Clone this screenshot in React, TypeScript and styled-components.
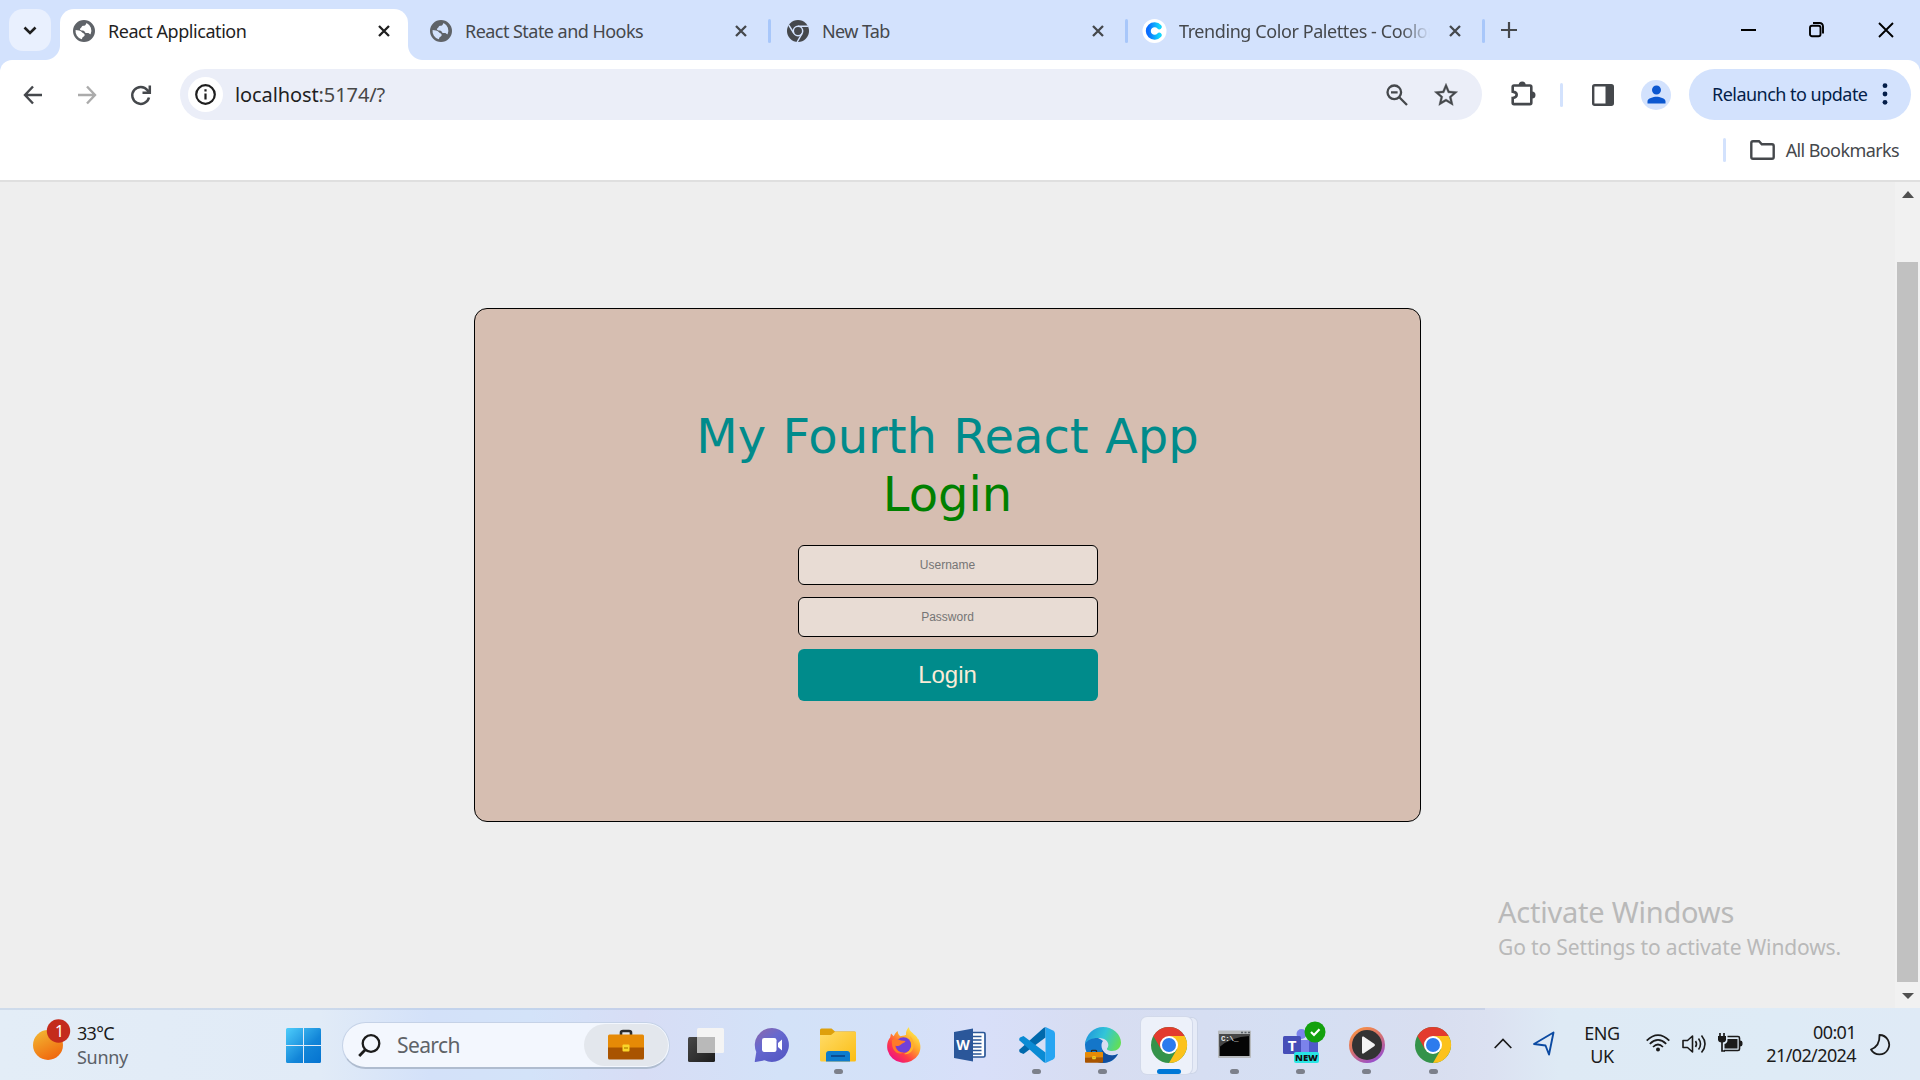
import React from "react";
import styled, { createGlobalStyle, css } from "styled-components";
import { MdStarOutline, MdPerson } from "react-icons/md";

const GlobalStyle = createGlobalStyle`
  *, *::before, *::after { box-sizing: border-box; }
  body { margin: 0; background: #ededed; overflow: hidden; }
  svg { display: block; flex: none; overflow: visible; }
`;

const ui = `"Noto Sans", "Open Sans", sans-serif`;

const Screen = styled.div`
  position: relative;
  display: flex;
  flex-direction: column;
  width: 1920px;
  height: 1080px;
  overflow: hidden;
  font-family: ${ui};
`;

const Label = styled.span<{ $size?: number; $track?: number; $color?: string; $line?: number }>`
  font-size: ${(p) => p.$size ?? 18}px;
  letter-spacing: ${(p) => p.$track ?? 0}px;
  color: ${(p) => p.$color ?? "#3c4043"};
  line-height: ${(p) => p.$line ?? 24}px;
  font-weight: 400;
  white-space: nowrap;
`;

/* Tab strip */
const TabStrip = styled.header`
  display: flex;
  height: 60px;
  padding: 9px 0 0 9px;
  background: #d3e2fd;
`;
const TabSearch = styled.button`
  display: grid;
  place-items: center;
  width: 42px;
  height: 42px;
  margin-right: 9px;
  padding: 0;
  border: 0;
  border-radius: 14px;
  background: #e9f0fe;
`;
const TabCell = styled.div<{ $active?: boolean }>`
  position: relative;
  display: flex;
  align-items: center;
  width: ${(p) => (p.$active ? 348 : 357)}px;
  height: 51px;
  margin-right: ${(p) => (p.$active ? 9 : 0)}px;
  padding: 0 3px 8px 11px;
  ${(p) =>
    p.$active &&
    css`
      padding-right: 15px;
      background: #fff;
      border-radius: 14px 14px 0 0;
      &::before,
      &::after {
        content: "";
        position: absolute;
        bottom: 0;
        width: 15px;
        height: 15px;
      }
      &::before {
        left: -15px;
        background: radial-gradient(circle at 0 0, transparent 14.5px, #fff 15.5px);
      }
      &::after {
        right: -15px;
        background: radial-gradient(circle at 100% 0, transparent 14.5px, #fff 15.5px);
      }
    `}
`;
const Favicon = styled.div`
  display: grid;
  place-items: center;
  width: 26px;
  height: 26px;
  margin-right: 11px;
  flex: none;
`;
const TabTitle = styled.div<{ $fade?: boolean }>`
  flex: 1;
  min-width: 0;
  white-space: nowrap;
  padding-top: 1px;
  ${(p) => p.$fade && css`mask-image: linear-gradient(90deg, #000 222px, transparent 251px);`}
`;
const TabClose = styled.div`
  display: grid;
  place-items: center;
  width: 18px;
  margin: 0 0 0 9px;
`;
const TabRule = styled.i`
  width: 3px;
  height: 24px;
  margin-left: 18px;
  border-radius: 2px;
  background: #a8c7fa;
`;
const NewTab = styled.div`
  padding: 13px 0 0 13px;
`;
const WindowButtons = styled.div`
  display: flex;
  margin-left: auto;
  height: 41px;
`;
const WindowButton = styled.div`
  display: grid;
  place-items: center;
  width: 68.5px;
`;

/* Toolbar */
const ChromeBody = styled.div`
  background: linear-gradient(#d3e2fd 14px, #fff 14px);
  height: 122px;
`;
const ChromeSheet = styled.div`
  height: 122px;
  background: #fff;
  border-radius: 12px 12px 0 0;
  border-bottom: 2px solid #dfdfdf;
`;
const Toolbar = styled.div`
  display: flex;
  align-items: center;
  height: 69px;
  padding: 0 9px 0 22px;
`;
const NavGroup = styled.div`
  display: flex;
  gap: 31px;
  width: 158px;
`;
const Omnibox = styled.div`
  display: flex;
  align-items: center;
  width: 1302px;
  height: 51px;
  padding: 0 22px 0 8px;
  border-radius: 26px;
  background: #ebeef8;
`;
const SiteInfo = styled.div`
  display: grid;
  place-items: center;
  width: 35px;
  height: 35px;
  margin-right: 12px;
  border-radius: 50%;
  background: #fff;
`;
const UrlRest = styled.span`
  color: #474747;
`;
const OmniIcons = styled.div`
  display: flex;
  align-items: center;
  gap: 24px;
  margin-left: auto;
`;
const Extensions = styled.div`
  display: flex;
  align-items: center;
  margin-left: 27px;
`;
const PuzzleSlot = styled.div`
  padding-bottom: 3px;
`;
const ThinRule = styled.i<{ $gap: string }>`
  width: 3px;
  height: 24px;
  margin: ${(p) => p.$gap};
  border-radius: 2px;
  background: #d3e2fd;
`;
const Avatar = styled.div`
  display: grid;
  place-items: center;
  width: 30px;
  height: 30px;
  margin-left: 27px;
  border-radius: 50%;
  background: #d3e2fd;
  color: #0b57d0;
`;
const Relaunch = styled.button`
  display: flex;
  align-items: center;
  justify-content: space-between;
  width: 222px;
  height: 51px;
  margin-left: auto;
  padding: 0 23px 1px 23px;
  border: 0;
  border-radius: 26px;
  background: #d3e2fd;
  font-family: ${ui};
`;
const Bookmarks = styled.div`
  display: flex;
  align-items: center;
  justify-content: flex-end;
  height: 41px;
  padding-right: 21px;
`;
const FolderSlot = styled.div`
  margin-right: 11px;
`;

/* Page */
const Viewport = styled.main`
  display: flex;
  height: 826px;
  background: #eee;
`;
const Page = styled.div`
  flex: 1;
  display: flex;
  flex-direction: column;
  align-items: center;
  padding-top: 126px;
`;
const Card = styled.section`
  display: flex;
  flex-direction: column;
  align-items: center;
  width: 947px;
  height: 514px;
  padding-top: 98px;
  border: 1px solid #000;
  border-radius: 13px;
  background: #d6beb1;
`;
const Heading = styled.h1<{ $color: string }>`
  margin: 0;
  font: 400 48px/58px "DejaVu Sans", Verdana, sans-serif;
  word-spacing: 1px;
  color: ${(p) => p.$color};
`;
const Form = styled.form`
  display: flex;
  flex-direction: column;
  gap: 12px;
  width: 300px;
  margin-top: 22px;
`;
const Field = styled.input`
  height: 40px;
  padding: 0;
  border: 1px solid #000;
  border-radius: 6px;
  background: #e8dcd4;
  text-align: center;
  font: 12px "Liberation Sans", Arial, sans-serif;
  &::placeholder { color: #757575; }
`;
const Submit = styled.button`
  height: 52px;
  padding: 0;
  border: 0;
  border-radius: 6px;
  background: #008b8b;
  color: #faebd7;
  font: 24px "Liberation Sans", Arial, sans-serif;
`;
const ScrollTrack = styled.div`
  display: flex;
  flex-direction: column;
  align-items: center;
  width: 25px;
  background: #f1f1f1;
`;
const ScrollThumb = styled.div`
  width: 21px;
  height: 720px;
  margin: 64px 0 11px;
  background: #c1c1c1;
`;
const ScrollArrow = styled.i<{ $down?: boolean }>`
  margin-top: ${(p) => (p.$down ? 0 : 9)}px;
  border: 6px solid transparent;
  border-width: ${(p) => (p.$down ? "6px 6px 0" : "0 6px 7px")};
  border-${(p) => (p.$down ? "top" : "bottom")}-color: #505050;
`;
const Watermark = styled.aside`
  position: absolute;
  left: 1498px;
  top: 892px;
  display: flex;
  flex-direction: column;
`;

/* Taskbar */
const Taskbar = styled.footer`
  position: relative;
  display: flex;
  height: 72px;
  background: linear-gradient(90deg, #e3edf7 0, #e1ebf7 320px, #d3e1f9 430px, #d3e3f9 530px, #d7ddf5 640px, #d3e2f8 780px, #d4e1f8 900px, #d8dff9 980px, #d7ddf1 1100px, #d5dff3 1300px, #d8def0 1430px, #dbe1f1 1490px, #deeaf5 1560px, #deebf6 1780px, #dfeaf6 1920px);
  &::before {
    content: "";
    position: absolute;
    inset: 0 435px auto 0;
    height: 2px;
    background: rgba(150, 172, 205, 0.28);
  }
`;
const Weather = styled.div`
  display: flex;
  align-items: flex-start;
  width: 286px;
  padding: 11px 0 0 33px;
`;
const WeatherText = styled.div`
  display: flex;
  flex-direction: column;
  margin: 2px 0 0 7px;
`;
const StartSlot = styled.div`
  padding-top: 20px;
  width: 56px;
`;
const SearchBox = styled.div`
  display: flex;
  align-items: center;
  width: 328px;
  height: 47px;
  margin-top: 14px;
  padding: 0 1px 0 15px;
  border: 1px solid #c5d2e7;
  border-bottom: 2px solid #afbccf;
  border-radius: 24px;
  background: #f3f7fe;
`;
const SearchText = styled.div`
  margin-left: 16px;
`;
const SearchBadge = styled.div`
  display: grid;
  place-items: center;
  width: 84px;
  height: 42px;
  margin-left: auto;
  padding-right: 1px;
  border-radius: 21px;
  background: #e3e7ed;
`;
const Apps = styled.div`
  display: flex;
  margin-left: 3px;
`;
const AppCell = styled.div<{ $active?: boolean }>`
  display: flex;
  flex-direction: column;
  align-items: center;
  justify-content: space-between;
  width: 66.1px;
  height: 66px;
  padding-top: 19px;
  position: relative;
  > * { position: relative; }
  ${(p) =>
    p.$active &&
    css`
      &::before,
      &::after {
        content: "";
        position: absolute;
        top: 9px;
        height: 57px;
        border-radius: 6px;
      }
      &::before {
        left: 11px;
        width: 51px;
        background: #e6ebf7;
        border: 1px solid #ccd5e8;
        border-left-width: 0;
      }
      &::after {
        left: 5px;
        width: 51px;
        background: #edf1fa;
        box-shadow: 0 0 0 1px #d2d9ea;
        z-index: 0;
      }
      > * { z-index: 1; }
    `}
`;
const Dot = styled.i<{ $kind?: "idle" | "on" | "none" }>`
  width: ${(p) => (p.$kind === "on" ? 24 : 9)}px;
  height: 5px;
  border-radius: 3px;
  background: ${(p) => (p.$kind === "on" ? "#0078d7" : p.$kind === "idle" ? "#7c808b" : "transparent")};
`;
const Tray = styled.div`
  display: flex;
  align-items: center;
  margin-left: auto;
  padding: 0 30px 2px 0;
`;
const TrayItem = styled.div<{ $w: number; $align?: string; $shift?: number }>`
  display: flex;
  flex-direction: column;
  align-items: ${(p) => p.$align ?? "center"};
  width: ${(p) => p.$w}px;
  padding-top: ${(p) => p.$shift ?? 0}px;
`;

const CloseIcon = ({ color = "#3c3c3c", size = 12, w = 2.3 }) => (
  <svg width={size} height={size} viewBox={`0 0 ${size} ${size}`} stroke={color} strokeWidth={w}>
    <path d={`M1 1L${size - 1} ${size - 1}M${size - 1} 1L1 ${size - 1}`} />
  </svg>
);

const GlobeIcon = () => (
  <svg width="22" height="22" viewBox="0 0 22 22" fill="#5f6368" fillRule="evenodd">
    <path d="M11 0a11 11 0 1 1 0 22a11 11 0 0 1 0-22zM13.500 2.900C12.800 5 12 5.800 10 5.800c-1.200 0-1.200 1.400-2 1.900-1.500.900-1.300 2.600.500 2.700 1.800.100 2.800.100 3.400 1.500.500 1.300 1.600 1.200 3.300 1.200 1.300 0 1.300 1.600 2.400 1.200a8.700 8.700 0 0 0-4.100-11.400zM2.600 9.900A8.600 8.600 0 0 0 8.700 19.300c.700-.200.200-1.500 1.300-2.200 1.200-.700 1.900-1.300 1.600-2.500-.300-1.600-2-1.300-2.900-2.700C7.500 10 4.800 10.300 2.600 9.900z" />
  </svg>
);

const ChromeMono = () => (
  <svg width="22" height="22" viewBox="0 0 22 22">
    <circle cx="11" cy="11" r="11" fill="#45484c" />
    <circle cx="11" cy="11" r="4.7" fill="none" stroke="#d3e2fd" strokeWidth="1.5" />
    <path d="M11 6.3h10M6.9 13.3L1.8 5.2M15.1 13.3L10.2 22" stroke="#d3e2fd" strokeWidth="1.5" />
  </svg>
);

const CoolorsIcon = () => (
  <svg width="26" height="26" viewBox="0 0 26 26">
    <defs>
      <linearGradient id="cool" x1="0" x2="1">
        <stop offset="0" stopColor="#0a6cff" />
        <stop offset="1" stopColor="#12d4fb" />
      </linearGradient>
    </defs>
    <circle cx="12.5" cy="13" r="12" fill="#fff" />
    <path d="M17.300 8.800A6.300 6.300 0 1 0 17.300 17.200" fill="none" stroke="url(#cool)" strokeWidth="5" strokeLinecap="round" />
  </svg>
);

const ChromeIcon = () => (
  <svg width="36" height="36" viewBox="0 0 36 36">
    <circle cx="18" cy="18" r="18" fill="#34934a" />
    <path d="M18 9H33.6A18 18 0 0 1 18 36L25.8 22.5Z" fill="#fcc21b" />
    <path d="M2.4 9A18 18 0 0 1 33.6 9H18L10.2 22.5Z" fill="#e33b2e" />
    <circle cx="18" cy="18" r="9" fill="#fff" />
    <circle cx="18" cy="18" r="7" fill="#2c7bed" />
  </svg>
);

const Briefcase = () => (
  <>
    <path d="M13 5V2.5Q13 1 15 1h6q2 0 2 1.500V5" fill="none" stroke="#2b2b2b" strokeWidth="2.6" />
    <path d="M0 6q0-1.500 1.500-1.500h33q1.500 0 1.500 1.500v12H0z" fill="#e68a06" />
    <path d="M0 17.500h36v10.500q0 1.500-1.500 1.500h-33Q0 29.500 0 28z" fill="#a95400" />
    <rect x="14.500" y="14.500" width="7" height="7" rx="1" fill="#fad62a" />
    <path d="M16 18h4" stroke="#b98600" strokeWidth="1.300" />
  </>
);

const TaskViewIcon = () => (
  <svg width="36" height="36" viewBox="0 0 36 36">
    <defs>
      <linearGradient id="tv" x1="0" y1="0" x2="1" y2="1">
        <stop offset="0" stopColor="#484848" />
        <stop offset="1" stopColor="#1d1d1d" />
      </linearGradient>
    </defs>
    <rect x="0" y="10" width="27" height="25" rx="1.500" fill="url(#tv)" />
    <rect x="9" y="1" width="27" height="25" rx="1.500" fill="#f4f4f4" />
    <rect x="9" y="10" width="18" height="16" fill="#b9b9b9" />
  </svg>
);

const ChatIcon = () => (
  <svg width="36" height="36" viewBox="0 0 36 36">
    <defs>
      <linearGradient id="chat" x1="0" y1="0" x2="0.700" y2="1">
        <stop offset="0" stopColor="#9067a8" />
        <stop offset="0.450" stopColor="#6668cf" />
        <stop offset="1" stopColor="#5558c4" />
      </linearGradient>
    </defs>
    <path d="M18 1a17 17 0 1 1-7.500 32.300L1.500 35q-1 0-.700-1L2.300 25A17 17 0 0 1 18 1z" fill="url(#chat)" />
    <rect x="8" y="11" width="14.500" height="14" rx="2.200" fill="#fff" />
    <path d="M24 16l4-3.500v11L24 20z" fill="#fff" />
  </svg>
);

const FolderIcon = () => (
  <svg width="36" height="36" viewBox="0 0 36 36">
    <defs>
      <linearGradient id="fold" x1="0" y1="0" x2="1" y2="1">
        <stop offset="0" stopColor="#ffdc69" />
        <stop offset="1" stopColor="#fbbd13" />
      </linearGradient>
    </defs>
    <path d="M0 3q0-1.500 1.500-1.500h10L15 4.500h19.500q1.500 0 1.500 1.500v4H0z" fill="#dea00c" />
    <path d="M0 8h11l4-3.200h21V33q0 1.500-1.500 1.500h-33Q0 34.500 0 33z" fill="url(#fold)" />
    <path d="M6 34.500V27q0-3 3-3h18q3 0 3 3v7.500z" fill="#0e7ccd" />
    <path d="M11 29h14" stroke="#0a4d94" strokeWidth="2" />
  </svg>
);

const FirefoxIcon = () => (
  <svg width="36" height="36" viewBox="0 0 36 36">
    <defs>
      <linearGradient id="ff" x1="0.850" y1="0.100" x2="0.200" y2="0.900">
        <stop offset="0" stopColor="#fff04d" />
        <stop offset="0.380" stopColor="#ffa32b" />
        <stop offset="0.720" stopColor="#ff3f45" />
        <stop offset="1" stopColor="#ef157f" />
      </linearGradient>
    </defs>
    <path d="M23 0c0 4 3 5 5 7.500 1.500 1 3 2 3.500 4 1 .500 1.500 1.500 1.500 2.500 2 4 2 9-.500 13.500A17 17 0 0 1 1.500 23C.500 17 2 13 4.200 10.500L5 6.500l2.700 2.800c1-2.300 2.300-4 4-5.300 0 2 .800 4 2.800 5.200C17.500 8.700 20 8 20 8c-.500-3 .800-6 3-8z" fill="url(#ff)" />
    <circle cx="17.500" cy="18" r="7.800" fill="#7140d8" />
    <path d="M6 13c3-2 6-1 9 .500l4.500.500c-.500 2-3.500 2.200-4.800 3.800-1.700 1.500-4 1.500-5.700.700 1 5 5 7.500 9 7-6 3-13-1-12-12.500z" fill="#ff7a2a" />
    <path d="M24 9c5 5 5 12 1 16-3 3-7 2-7 2 6-2 8-7 7-11z" fill="#ffb12b" />
  </svg>
);

const WordIcon = () => (
  <svg width="36" height="36" viewBox="0 0 36 36">
    <rect x="14" y="5.500" width="19" height="24.500" rx="1.500" fill="#fff" stroke="#2b5797" strokeWidth="1.700" />
    <path d="M18 9.500h11.500M18 13h11.500M18 16.500h11.500M18 20h11.500M18 23.500h11.500M18 27h11.500" stroke="#2b5797" strokeWidth="1.600" />
    <path d="M2 5L21 1.500v33L2 31z" fill="#2b579a" />
    <text x="11" y="23" textAnchor="middle" fontFamily="Open Sans, sans-serif" fontWeight="700" fontSize="14" fill="#fff">W</text>
  </svg>
);

const CodeIcon = () => (
  <svg width="36" height="36" viewBox="0 0 36 36">
    <path d="M26.500 0v10.500L4.500 27 1 25.500Q-.500 24 .500 22.500L24.500 1z" fill="#0069ac" />
    <path d="M26.500 36V25.500L4.500 9 1 10.500Q-.500 12 .500 13.500L24.500 35z" fill="#0a8bd4" />
    <path d="M26.500 0L34 3.500q2 1 2 3v23q0 2-2 3L26.500 36z" fill="#27a5f2" />
  </svg>
);

const EdgeIcon = () => (
  <svg width="36" height="36" viewBox="0 0 36 36">
    <defs>
      <linearGradient id="edgeTop" x1="0" y1="0.300" x2="1" y2="0.600">
        <stop offset="0" stopColor="#2196dc" />
        <stop offset="0.500" stopColor="#32c5d8" />
        <stop offset="1" stopColor="#62df56" />
      </linearGradient>
    </defs>
    <path d="M0 18c0 10 8 18 18 18 8 0 12-4 15-9-5 2.500-12 2-14.500-2.500C15 19 17 15 18 14 12 8 0 9 0 18z" fill="#1476c9" />
    <path d="M15 35.800c8 1 14.500-2.800 18-8.800-6 3-13 1-15.500-4C15 28 16 32 15 35.800z" fill="#124f9e" />
    <path d="M0 17C1 7 9 0 18 0c10 0 18 7.500 18 15.500 0 5-4 8.500-9 8.500-3 0-5.500-1-5-2.500 3-3 1-9-5-10C10 10 3 12 0 17z" fill="url(#edgeTop)" />
    <g transform="translate(0 23) scale(.5 .43)"><Briefcase /></g>
  </svg>
);

const TerminalIcon = () => (
  <svg width="36" height="36" viewBox="0 0 36 36">
    <rect x="1" y="3.500" width="33" height="27.500" rx="1" fill="#b7babd" />
    <path d="M24 5.500h2m1.500 0h2m1.500 0h2" stroke="#5a6068" strokeWidth="1.500" />
    <rect x="2.500" y="7" width="30" height="22" fill="#050505" />
    <path d="M2.500 7h30v2Q14 10 2.500 20z" fill="#474747" />
    <text x="4" y="14" fontFamily="Liberation Mono, monospace" fontWeight="700" fontSize="7.500" letterSpacing="-.2" fill="#eee">C:\_</text>
  </svg>
);

const TeamsIcon = () => (
  <svg width="36" height="36" viewBox="0 0 36 36">
    <circle cx="18.500" cy="7" r="5" fill="#7b83eb" />
    <path d="M14 13h13v12q0 7-7 7t-7-6z" fill="#7b83eb" />
    <path d="M26 14h9v11q0 5-5 5h-4z" fill="#5059c9" />
    <rect x="0" y="9" width="18" height="18" rx="1.500" fill="#464eb8" />
    <text x="9" y="23.500" textAnchor="middle" fontFamily="Open Sans, sans-serif" fontWeight="700" fontSize="15" fill="#fff">T</text>
    <circle cx="32" cy="5" r="10.500" fill="#13a10e" />
    <path d="M28 5l3 3 5.500-5.800" fill="none" stroke="#fff" strokeWidth="2.200" />
    <rect x="11" y="25" width="25" height="11" rx="2" fill="#28e5e5" />
    <text x="23.500" y="34" textAnchor="middle" fontFamily="Open Sans, sans-serif" fontWeight="800" fontSize="9.500" fill="#111">NEW</text>
  </svg>
);

const MediaIcon = () => (
  <svg width="36" height="36" viewBox="0 0 36 36">
    <defs>
      <linearGradient id="media" x1="0" y1="0" x2="0.600" y2="1">
        <stop offset="0" stopColor="#ff9a3c" />
        <stop offset="0.500" stopColor="#dd7467" />
        <stop offset="1" stopColor="#9a50c8" />
      </linearGradient>
    </defs>
    <circle cx="18" cy="18" r="18" fill="url(#media)" />
    <circle cx="18" cy="18" r="15" fill="#333" />
    <path d="M13 10.500q0-1.500 1.500-1L25.500 17q1 1 0 2L14.500 26.500q-1.500.500-1.500-1z" fill="#f3f3f3" />
  </svg>
);

const StartIcon = () => (
  <svg width="35" height="35" viewBox="0 0 35 35">
    <defs>
      <linearGradient id="win" gradientUnits="userSpaceOnUse" x1="0" y1="0" x2="35" y2="35">
        <stop offset="0" stopColor="#4ecdfb" />
        <stop offset="0.600" stopColor="#1285d8" />
        <stop offset="1" stopColor="#0573d0" />
      </linearGradient>
    </defs>
    <path d="M1.500 0H17v17H0V1.500Q0 0 1.500 0zM18 0h15.500Q35 0 35 1.500V17H18zM0 18h17v17H1.500Q0 35 0 33.500zM18 18h17v15.500q0 1.500-1.500 1.500H18z" fill="url(#win)" />
  </svg>
);

const WeatherIcon = () => (
  <svg width="37" height="42" viewBox="0 0 37 42">
    <defs>
      <linearGradient id="sun" x1="0.200" y1="0" x2="0.700" y2="1">
        <stop offset="0" stopColor="#f2b632" />
        <stop offset="1" stopColor="#f0650c" />
      </linearGradient>
    </defs>
    <circle cx="15" cy="26" r="15" fill="url(#sun)" />
    <circle cx="25.500" cy="12" r="11.700" fill="#c42b1c" />
    <text x="26.500" y="17.500" textAnchor="middle" fontFamily="Noto Sans, sans-serif" fontSize="16" fill="#fff">1</text>
  </svg>
);

const tabs = [
  { title: "React Application", icon: <GlobeIcon />, active: true, track: -0.45 },
  { title: "React State and Hooks", icon: <GlobeIcon />, track: -0.54 },
  { title: "New Tab", icon: <ChromeMono />, track: -0.6 },
  { title: "Trending Color Palettes - Coolor", icon: <CoolorsIcon />, fade: true, track: -0.42 },
];

const apps: { icon: React.ReactNode; dot: "idle" | "on" | "none" }[] = [
  { icon: <TaskViewIcon />, dot: "none" },
  { icon: <ChatIcon />, dot: "none" },
  { icon: <FolderIcon />, dot: "idle" },
  { icon: <FirefoxIcon />, dot: "none" },
  { icon: <WordIcon />, dot: "none" },
  { icon: <CodeIcon />, dot: "idle" },
  { icon: <EdgeIcon />, dot: "idle" },
  { icon: <ChromeIcon />, dot: "on" },
  { icon: <TerminalIcon />, dot: "idle" },
  { icon: <TeamsIcon />, dot: "idle" },
  { icon: <MediaIcon />, dot: "idle" },
  { icon: <ChromeIcon />, dot: "idle" },
];

export default function App() {
  return (
    <Screen>
      <GlobalStyle />
      <TabStrip>
        <TabSearch>
          <svg width="14" height="9" viewBox="0 0 14 9" fill="none" stroke="#1f1f1f" strokeWidth="2.6">
            <path d="M1.500 1.500L7 7l5.500-5.500" />
          </svg>
        </TabSearch>
        {tabs.map((t) => (
          <TabCell key={t.title} $active={t.active}>
            <Favicon>{t.icon}</Favicon>
            <TabTitle $fade={t.fade}>
              <Label $track={t.track} $color={t.active ? "#1f1f1f" : "#45484c"}>{t.title}</Label>
            </TabTitle>
            <TabClose>
              <CloseIcon color={t.active ? "#1f1f1f" : "#45484c"} />
            </TabClose>
            {!t.active && <TabRule />}
          </TabCell>
        ))}
        <NewTab>
          <svg width="16" height="16" viewBox="0 0 16 16" stroke="#45484c" strokeWidth="2.2">
            <path d="M8 0v16M0 8h16" />
          </svg>
        </NewTab>
        <WindowButtons>
          <WindowButton>
            <svg width="15" height="16" viewBox="0 0 15 16"><path d="M0 8h15" stroke="#000" strokeWidth="2" /></svg>
          </WindowButton>
          <WindowButton>
            <svg width="15" height="15" viewBox="0 0 15 15" fill="none" stroke="#000" strokeWidth="1.900">
              <rect x="0" y="3.700" width="10.500" height="10.500" rx="2" />
              <path d="M3 1h6.500Q13 1 13 4.500V11.500" />
            </svg>
          </WindowButton>
          <WindowButton><CloseIcon color="#000" size={16} w={1.9} /></WindowButton>
        </WindowButtons>
      </TabStrip>

      <ChromeBody>
        <ChromeSheet>
          <Toolbar>
            <NavGroup>
              <svg width="22" height="22" viewBox="0 0 22 22" fill="none" stroke="#45484c" strokeWidth="2.400">
                <path d="M20 11H3.500M11 2.500L3 11l8 8.500" />
              </svg>
              <svg width="22" height="22" viewBox="0 0 22 22" fill="none" stroke="#ababab" strokeWidth="2.400">
                <path d="M3 11h16.500M12 2.500L20 11l-8 8.500" />
              </svg>
              <svg width="24" height="22" viewBox="0 0 24 22" fill="none" stroke="#45484c" strokeWidth="2.500">
                <path d="M21 13.500A8.500 8.500 0 1 1 19.500 6.200L21.500 8.500M21.800 1.500V8.700H14.500" />
              </svg>
            </NavGroup>
            <Omnibox>
              <SiteInfo>
                <svg width="21" height="21" viewBox="0 0 21 21" fill="none" stroke="#1f1f1f" strokeWidth="2.200">
                  <circle cx="10.500" cy="10.500" r="9.300" />
                  <path d="M10.500 9.500v6M10.500 5.300v2.300" />
                </svg>
              </SiteInfo>
              <Label $size={20} $track={-0.1} $color="#1f1f1f">
                localhost<UrlRest>:5174/?</UrlRest>
              </Label>
              <OmniIcons>
                <svg width="22" height="22" viewBox="0 0 22 22" fill="none" stroke="#45484c" strokeWidth="2.300">
                  <circle cx="8.300" cy="8.300" r="6.800" />
                  <path d="M13.300 13.300L21 21M5 8.300h6.600" />
                </svg>
                <MdStarOutline size={28} color="#45484c" stroke="#45484c" strokeWidth={0.3} />
              </OmniIcons>
            </Omnibox>
            <Extensions>
              <PuzzleSlot>
                <svg width="27" height="26" viewBox="0 0 27 26">
                  <path d="M5 5.500h16q1.300 0 1.300 1.300v16q0 1.300-1.300 1.300H5q-1.300 0-1.300-1.300v-4.800q4-.500 4-3.200t-4-3.200V6.800Q3.700 5.500 5 5.500z" fill="none" stroke="#45484c" strokeWidth="2.600" />
                  <path d="M9.700 5a3.500 3.500 0 0 1 7 0zM23 11.400a3.500 3.500 0 0 1 0 7z" fill="#45484c" />
                </svg>
              </PuzzleSlot>
              <ThinRule $gap="0 29px 0 24px" />
              <svg width="22" height="22" viewBox="0 0 22 22">
                <rect x="1.200" y="1.200" width="19.600" height="19.600" rx="1.500" fill="none" stroke="#45484c" strokeWidth="2.400" />
                <path d="M13.500 1h7.500v20h-7.500z" fill="#45484c" />
              </svg>
              <Avatar><MdPerson size={27} /></Avatar>
            </Extensions>
            <Relaunch>
              <Label $track={-0.52} $color="#041e49">Relaunch to update</Label>
              <svg width="6" height="22" viewBox="0 0 6 22" fill="#041e49">
                <circle cx="3" cy="2.700" r="2.400" /><circle cx="3" cy="11" r="2.400" /><circle cx="3" cy="19.300" r="2.400" />
              </svg>
            </Relaunch>
          </Toolbar>
          <Bookmarks>
            <ThinRule $gap="0 24px 0 0" />
            <FolderSlot>
              <svg width="25" height="20" viewBox="0 0 25 20" fill="none" stroke="#45484c" strokeWidth="2.400">
                <path d="M1.300 3q0-1.700 1.700-1.700h6l2.800 3H22q1.700 0 1.700 1.700v11q0 1.700-1.700 1.700H3q-1.700 0-1.700-1.700z" />
              </svg>
            </FolderSlot>
            <Label $track={-0.6} $color="#45484c">All Bookmarks</Label>
          </Bookmarks>
        </ChromeSheet>
      </ChromeBody>

      <Viewport>
        <Page>
          <Card>
            <Heading $color="#008b8b">My Fourth React App</Heading>
            <Heading $color="#008000">Login</Heading>
            <Form>
              <Field placeholder="Username" />
              <Field placeholder="Password" />
              <Submit type="button">Login</Submit>
            </Form>
          </Card>
        </Page>
        <ScrollTrack>
          <ScrollArrow />
          <ScrollThumb />
          <ScrollArrow $down />
        </ScrollTrack>
      </Viewport>

      <Taskbar>
        <Weather>
          <WeatherIcon />
          <WeatherText>
            <Label $track={-0.7} $color="#1b1b1b">33°C</Label>
            <Label $track={-0.3} $color="#5b6067">Sunny</Label>
          </WeatherText>
        </Weather>
        <StartSlot><StartIcon /></StartSlot>
        <SearchBox>
          <svg width="23" height="23" viewBox="0 0 23 23" fill="none" stroke="#1b1b1b" strokeWidth="2.300">
            <circle cx="13" cy="9.500" r="8.300" />
            <path d="M7.500 15.500L1.200 22" strokeWidth="2.800" />
          </svg>
          <SearchText><Label $size={21} $color="#5f6368" $track={-0.6}>Search</Label></SearchText>
          <SearchBadge>
            <svg width="36" height="30" viewBox="0 0 36 30"><Briefcase /></svg>
          </SearchBadge>
        </SearchBox>
        <Apps>
          {apps.map((a, i) => (
            <AppCell key={i} $active={a.dot === "on"}>
              {a.icon}
              <Dot $kind={a.dot} />
            </AppCell>
          ))}
        </Apps>
        <Tray>
          <TrayItem $w={40}>
            <svg width="18" height="11" viewBox="0 0 18 11" fill="none" stroke="#1b1b1b" strokeWidth="1.700"><path d="M.7 10L9 1.500 17.300 10" /></svg>
          </TrayItem>
          <TrayItem $w={41}>
            <svg width="22" height="25" viewBox="0 0 22 25" fill="none" stroke="#0b4aa2" strokeWidth="1.900" strokeLinejoin="round"><path d="M20.500 1.500L1 13l11.500 1.500L16 23.500z" /></svg>
          </TrayItem>
          <TrayItem $w={76} $shift={3}>
            <Label $track={-0.5} $line={23} $color="#1b1b1b">ENG</Label>
            <Label $track={-0.5} $line={23} $color="#1b1b1b">UK</Label>
          </TrayItem>
          <TrayItem $w={36}>
            <svg width="24" height="18" viewBox="0 0 24 18" fill="none" stroke="#1b1b1b" strokeWidth="1.700">
              <path d="M.7 6.700Q12-4.500 23.300 6.700M3.800 9.800Q12 2 20.200 9.800M7 13Q12 8 17 13" />
              <circle cx="12" cy="15.500" r="2" fill="#1b1b1b" stroke="none" />
            </svg>
          </TrayItem>
          <TrayItem $w={36} $shift={1}>
            <svg width="25" height="20" viewBox="0 0 25 20" fill="none" stroke="#1b1b1b" strokeWidth="1.600" strokeLinejoin="round">
              <path d="M1 6.500h4.500L10.500 2v16L5.500 13.500H1zM13.500 7q2 3 0 6M16.500 4.500q4 5.500 0 11M19.500 1.500q7 8.500 0 17" />
            </svg>
          </TrayItem>
          <TrayItem $w={37}>
            <svg width="25" height="20" viewBox="0 0 25 20">
              <path d="M2 0v3M6 0v3M4 9v9h3" stroke="#1b1b1b" strokeWidth="1.700" fill="none" />
              <path d="M0 3h8v3.500Q8 9.500 4 9.500T0 6.500z" fill="#1b1b1b" />
              <path d="M9.500 3.500H20q1.500 0 1.500 1.500v11q0 1.500-1.500 1.500H6" fill="none" stroke="#1b1b1b" strokeWidth="1.600" />
              <path d="M9.500 6h10v9.500H6.500V11q3-1 3-4zM22 7.500q2.500 0 2.500 2v2q0 2-2.500 2z" fill="#1b1b1b" />
            </svg>
          </TrayItem>
          <TrayItem $w={107} $align="flex-end" $shift={1}>
            <Label $track={-0.6} $line={23} $color="#1b1b1b">00:01</Label>
            <Label $track={-0.6} $line={23} $color="#1b1b1b">21/02/2024</Label>
          </TrayItem>
          <TrayItem $w={34} $align="flex-end" $shift={2}>
            <svg width="20" height="21" viewBox="0 0 20 21" fill="none" stroke="#1b1b1b" strokeWidth="1.800" strokeLinejoin="round">
              <path d="M9.500 1A9.700 9.700 0 1 1 1 15.500Q10 12 9.500 1z" />
            </svg>
          </TrayItem>
        </Tray>
      </Taskbar>
      <Watermark>
        <Label $size={29} $line={40} $track={-0.22} $color="#b9b9b9">Activate Windows</Label>
        <Label $size={21} $line={30} $track={-0.14} $color="#b9b9b9">Go to Settings to activate Windows.</Label>
      </Watermark>
    </Screen>
  );
}
